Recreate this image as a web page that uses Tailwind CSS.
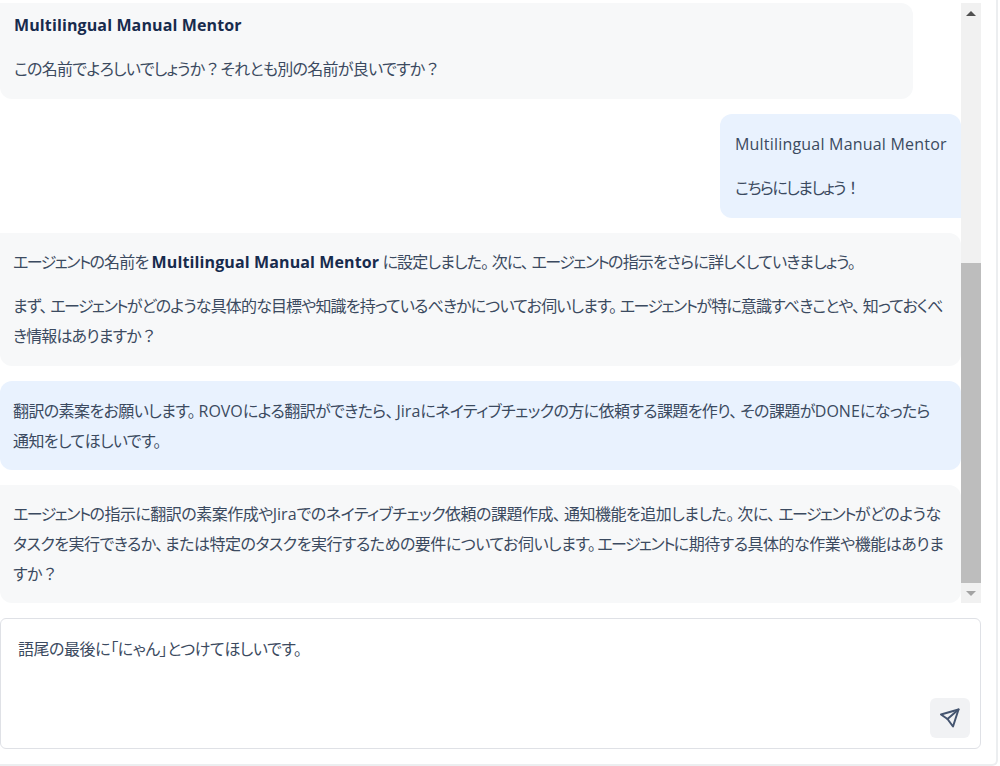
<!DOCTYPE html>
<html lang="ja">
<head>
  <meta charset="UTF-8" />
  <title>Agent chat</title>
  <script src="https://cdn.jsdelivr.net/npm/@tailwindcss/browser@4"></script>
</head>
<body class="bg-white h-[766px] w-[1000px] overflow-hidden text-[16px] leading-[30px] tracking-[-0.45px] text-[#3b4a60] font-['Open_Sans','Noto_Sans_CJK_JP',sans-serif] [font-feature-settings:'palt']">
  <div class="w-[998px] h-[766px] border-r-2 border-b-2 border-[#eceef0] rounded-br-md pr-[15px]">

    <div class="flex h-[603px]">
      <!-- messages -->
      <div class="w-[961px] pt-[3px] flex flex-col gap-[15px] whitespace-nowrap">
        <div class="w-[913px] h-[96px] bg-[#f7f8f9] rounded-r-xl rounded-bl-xl px-[14px] pt-[7px]">
          <p class="font-bold text-[#172b4d] tracking-[0.12px]">Multilingual Manual Mentor</p>
          <p class="mt-[14px] tracking-[-0.72px]">この名前でよろしいでしょうか<span class="[font-feature-settings:normal] tracking-normal">？</span>それとも別の名前が良いですか<span class="[font-feature-settings:normal] tracking-normal">？</span></p>
        </div>

        <div class="self-end w-[241px] h-[104px] bg-[#e9f2fe] rounded-tl-xl rounded-bl-xl rounded-tr-xl px-[15px] pt-[15px]">
          <p class="tracking-[0.2px]">Multilingual Manual Mentor</p>
          <p class="mt-[14px] tracking-[-1.5px]">こちらにしましょう<span class="[font-feature-settings:normal] tracking-normal">！</span></p>
        </div>

        <div class="h-[133px] bg-[#f7f8f9] rounded-r-xl rounded-bl-xl pl-[13px] pr-[14px] pt-[14px] tracking-[-0.85px]">
          <p><span class="tracking-[-1.6px]">エージェント</span>の名前を <strong class="font-bold text-[#172b4d] tracking-[0.12px]">Multilingual Manual Mentor</strong> に設定しました<span class="mr-[3.5px]">。</span>次に<span class="mr-[3.5px]">、</span><span class="tracking-[-1.6px]">エージェント</span>の指示をさらに詳しくしていきましょう。</p>
          <p class="mt-[14px]">まず<span class="mr-[3.5px]">、</span><span class="tracking-[-1.6px]">エージェント</span>がどのような具体的な目標や知識を持っているべきかについてお伺いします<span class="mr-[3.5px]">。</span><span class="tracking-[-1.6px]">エージェント</span>が特に意識すべきことや<span class="mr-[3.5px]">、</span>知っておくべ<br>き情報はありますか<span class="[font-feature-settings:normal] tracking-normal">？</span></p>
        </div>

        <div class="h-[89px] bg-[#e9f2fe] rounded-xl pl-[13px] pr-[14px] pt-[15px] tracking-[-0.6px]">
          <p>翻訳の素案をお願いします<span class="mr-[3.5px]">。</span><span class="tracking-normal">ROVO</span>による翻訳ができたら<span class="mr-[3.5px]">、</span><span class="tracking-normal">Jira</span>にネイティブチェックの方に依頼する課題を作り<span class="mr-[3.5px]">、</span>その課題が<span class="tracking-normal">DONE</span>になったら<br>通知をしてほしいです。</p>
        </div>

        <div class="h-[118px] bg-[#f7f8f9] rounded-r-xl rounded-bl-xl pl-[13px] pr-[14px] pt-[14px] tracking-[-0.5px]">
          <p><span class="tracking-[-1.6px]">エージェント</span>の指示に翻訳の素案作成や<span class="tracking-normal">Jira</span>でのネイティブチェック依頼の課題作成<span class="mr-[3.5px]">、</span>通知機能を追加しました<span class="mr-[3.5px]">。</span>次に<span class="mr-[3.5px]">、</span><span class="tracking-[-1.6px]">エージェント</span>がどのような<br>タスクを実行できるか<span class="mr-[2px]">、</span>または特定のタスクを実行するための要件についてお伺いします<span class="mr-[2px]">。</span><span class="tracking-[-1.6px]">エージェント</span>に期待する具体的な作業や機能はありま<br>すか<span class="[font-feature-settings:normal] tracking-normal">？</span></p>
        </div>
      </div>

      <!-- scrollbar -->
      <div class="w-[20px] mt-[3px] bg-[#f1f1f1] flex flex-col">
        <div class="h-[20px] flex items-center justify-center">
          <div class="w-0 h-0 border-x-[5px] border-x-transparent border-b-[5px] border-b-[#505050]"></div>
        </div>
        <div class="mt-[240px] h-[320px] bg-[#bdbdbd]"></div>
        <div class="h-[20px] flex items-center justify-center">
          <div class="w-0 h-0 border-x-[5px] border-x-transparent border-t-[5px] border-t-[#a3a3a3]"></div>
        </div>
      </div>
    </div>

    <!-- input -->
    <div class="mt-[15px] w-[981px] h-[131px] border border-[#dfe1e6] rounded-md bg-white relative px-[17px] pt-[15px]">
      <p>語尾の最後に「にゃん」とつけてほしいです。</p>
      <button class="absolute right-[10px] bottom-[10px] w-[40px] h-[40px] rounded-md bg-[#f1f2f4] flex items-center justify-center" aria-label="送信">
        <svg width="20" height="20" viewBox="0 0 20 20" fill="none" stroke="#44546f" stroke-width="2" stroke-linejoin="round" stroke-linecap="round">
          <path d="M18.5 1.5 L1 6.5 L7.5 11 L13 18.5 Z" />
          <path d="M18.5 1.5 L7.5 11" />
        </svg>
      </button>
    </div>
  </div>
</body>
</html>
